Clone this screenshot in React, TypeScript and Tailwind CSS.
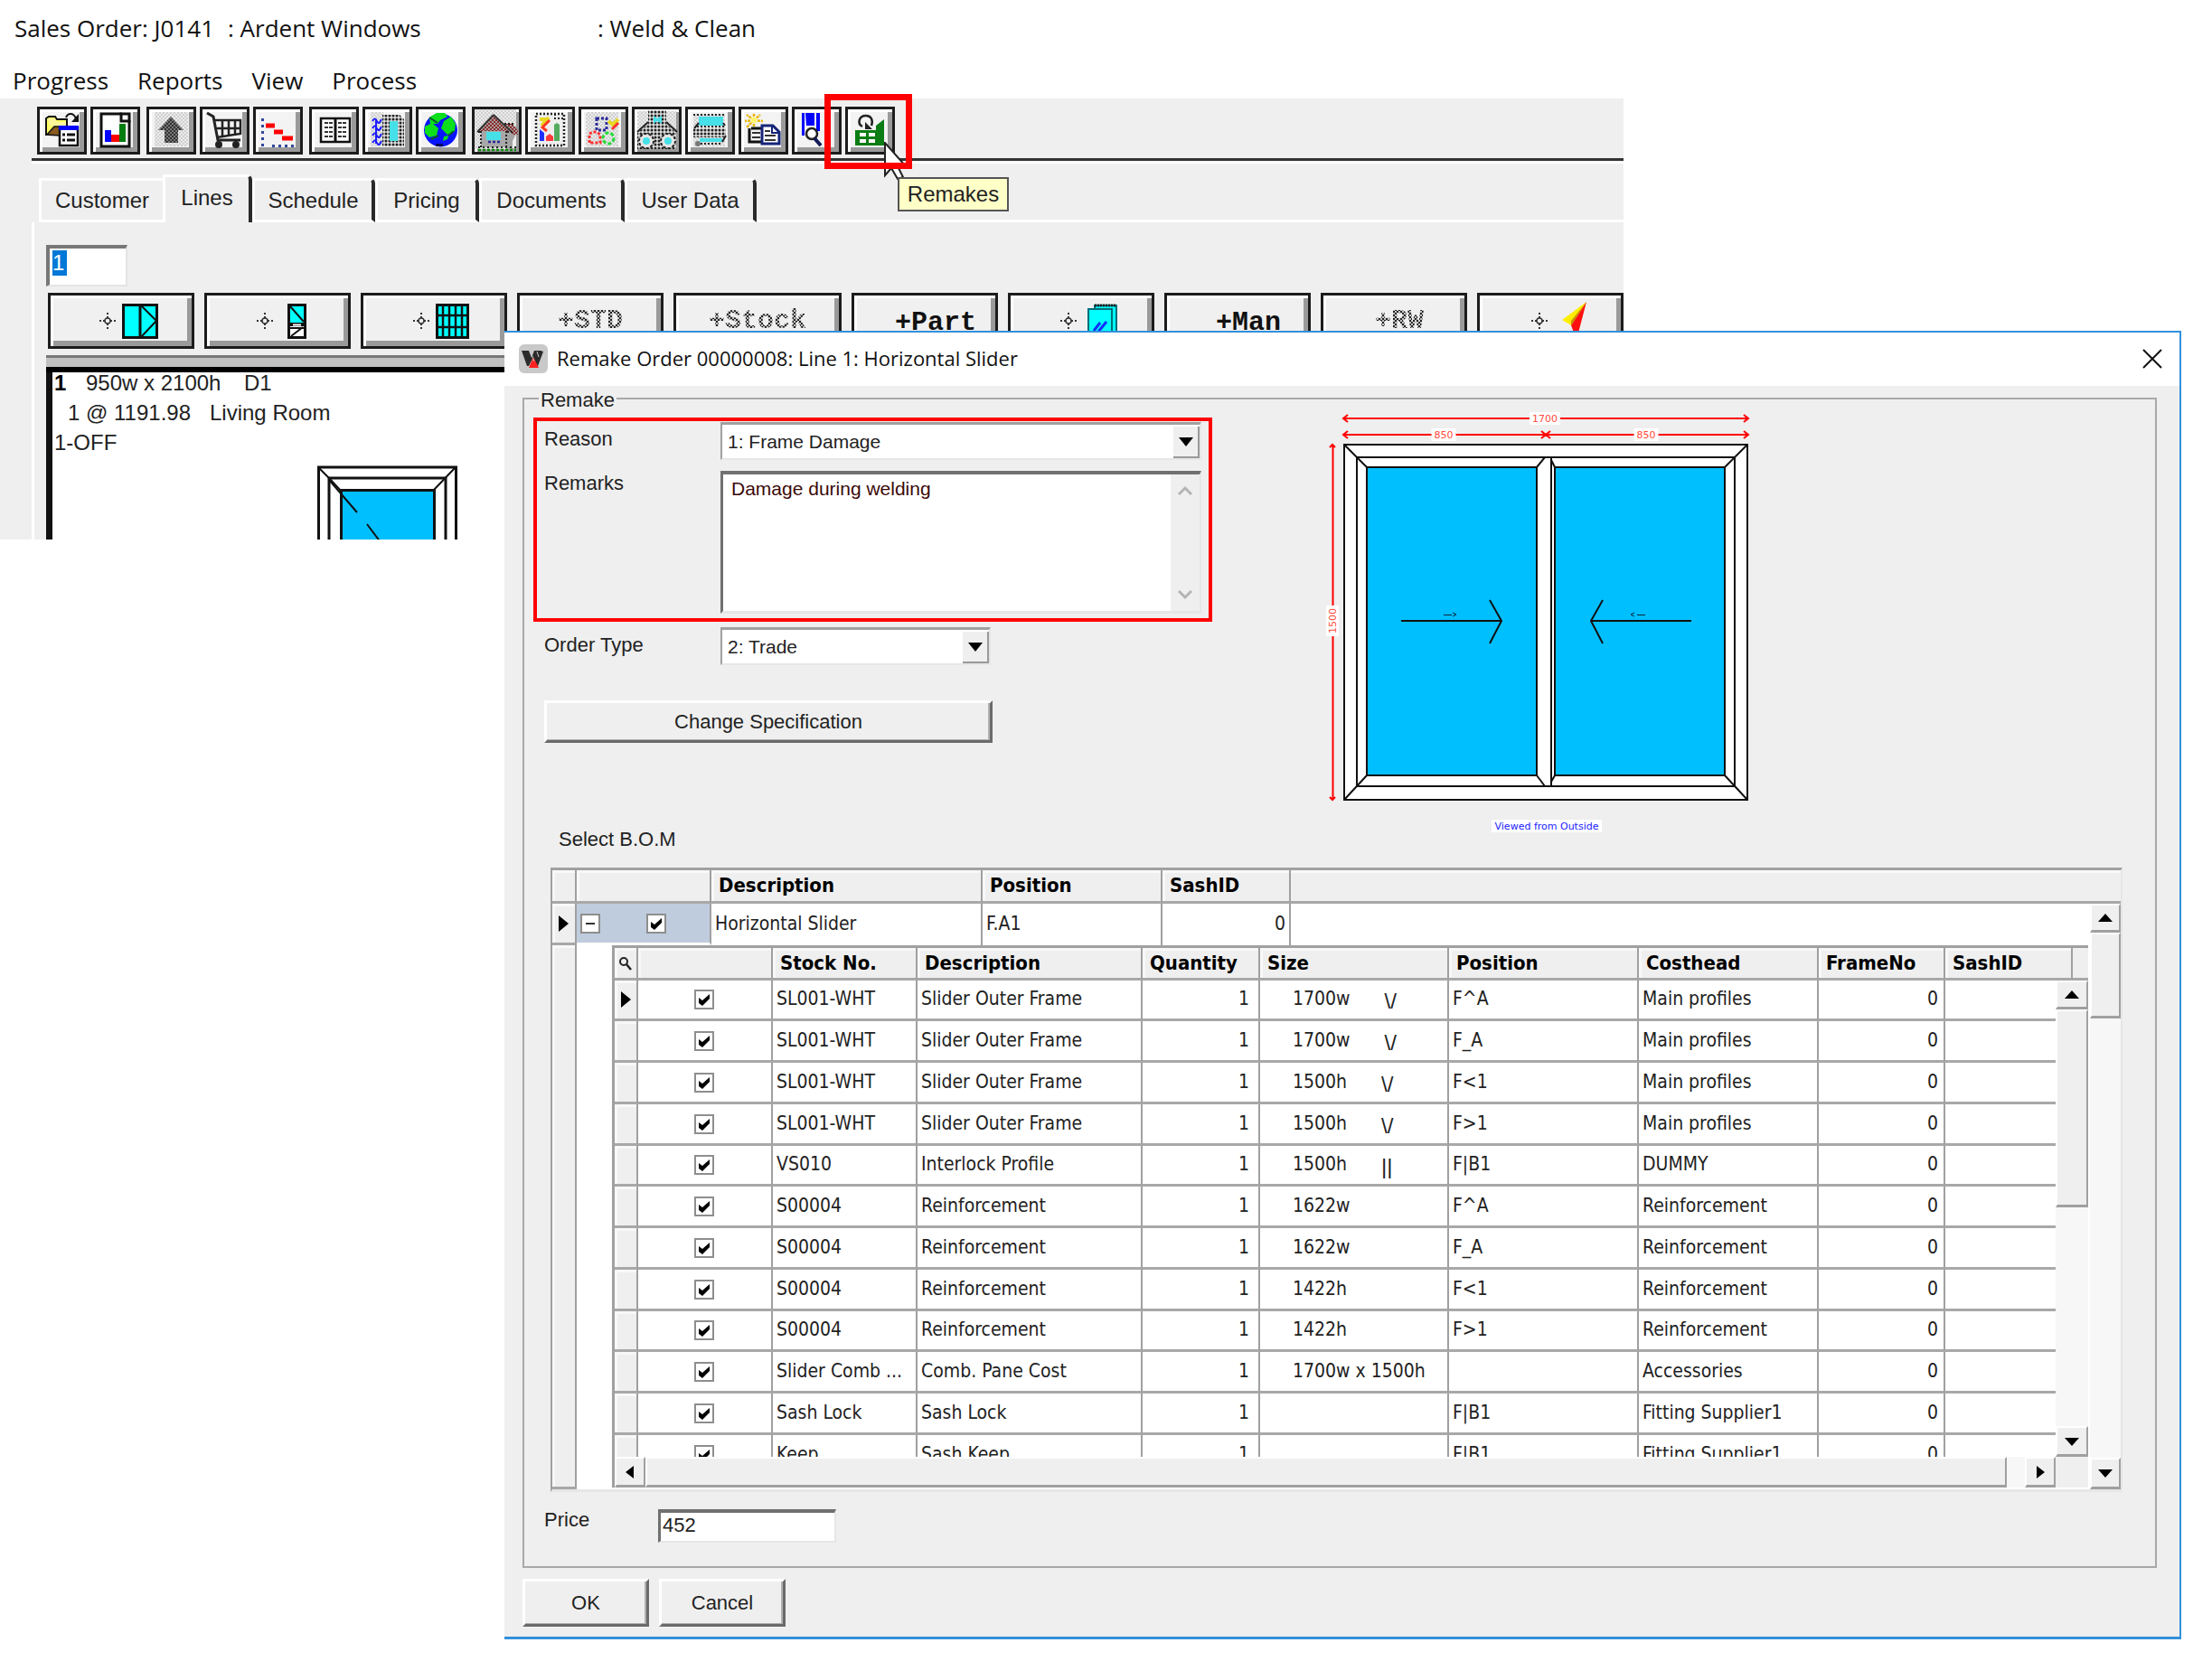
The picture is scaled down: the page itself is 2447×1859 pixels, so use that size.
import React from "react";

const ARIAL = "font-['Liberation_Sans',Arial,sans-serif]";
const SEGOE = "font-['Open_Sans','Noto_Sans',sans-serif]";
const TAHOMA = "font-['DejaVu_Sans_Condensed','Open_Sans',sans-serif]";

function Patterns() {
  return (
    <svg width="0" height="0" className="absolute" aria-hidden="true">
      <defs>
        <pattern id="mist" width="4" height="4" patternUnits="userSpaceOnUse">
          <rect width="4" height="4" fill="#ececec" />
          <rect width="2" height="2" fill="#cfcfcf" />
          <rect x="2" y="2" width="2" height="2" fill="#cfcfcf" />
        </pattern>
        <pattern id="dots" width="4" height="4" patternUnits="userSpaceOnUse">
          <rect width="4" height="4" fill="#e0e0e0" />
          <circle cx="2" cy="2" r="1.500" fill="#222" />
        </pattern>
        <pattern id="dense" width="4" height="4" patternUnits="userSpaceOnUse">
          <rect width="4" height="4" fill="#777" />
          <rect width="2" height="2" fill="#333" />
          <rect x="2" y="2" width="2" height="2" fill="#333" />
        </pattern>
        <pattern id="brick" width="4" height="4" patternUnits="userSpaceOnUse">
          <rect width="4" height="4" fill="#a89a9a" />
          <rect width="2" height="2" fill="#8a2a2a" />
          <rect x="2" y="2" width="2" height="2" fill="#8a2a2a" />
        </pattern>
      </defs>
    </svg>
  );
}

const ICONS: { name: string; art: React.ReactNode }[][] = [
  [
    {
      name: "Open order",
      art: (
        <>
          <path d="M10 32V13l3-2h7l2 3h11v8" fill="#ffff66" stroke="#111" strokeWidth="2" />
          <path d="M11 31l8-9h6v10z" fill="#8b5a1e" stroke="#111" strokeWidth="1.5" />
          <path d="M12 13h7l3 4h10v4H14z" fill="#fff59a" />
          <path d="M32 12c2-5 8-6 11 1" fill="none" stroke="#111" strokeWidth="2" />
          <path d="M46 8v9h-8z" fill="#111" />
          <rect x="25" y="23" width="20" height="20" fill="#fff" stroke="#111" strokeWidth="2.5" />
          <rect x="24" y="21" width="22" height="5" fill="#00f" />
          <path d="M28 31h3M28 37h3M33 31h9M33 37h9" stroke="#111" strokeWidth="3" />
        </>
      ),
    },
    {
      name: "Order report",
      art: (
        <>
          <path d="M12 8h22l9 8v28H12z" fill="#fff" stroke="#111" strokeWidth="3" />
          <path d="M34 8v8h9V8z" fill="#fff" stroke="#111" strokeWidth="3" />
          <rect x="16" y="26" width="7" height="13" fill="#00f" />
          <rect x="23" y="31" width="9" height="8" fill="#f00" />
          <rect x="32" y="19" width="7" height="20" fill="#007d10" />
        </>
      ),
    },
  ],
  [
    {
      name: "Promote",
      art: (
        <>
          <rect x="9" y="6" width="37" height="38" fill="url(#mist)" />
          <path d="M27 11l14 15h-6v14H20V26h-7z" fill="url(#dense)" />
        </>
      ),
    },
    {
      name: "Purchase",
      art: (
        <g fill="none" stroke="#222" strokeWidth="3">
          <path d="M8 7l7 4 5 26h25" />
          <path d="M17 15h28v15l-26 4M19 24h26M25 15v18M32 15v17M39 15v17" strokeWidth="2.5" />
          <circle cx="21" cy="42" r="2.5" fill="#222" />
          <circle cx="40" cy="42" r="2.5" fill="#222" />
        </g>
      ),
    },
    {
      name: "Schedule chart",
      art: (
        <>
          <path d="M10.5 13v32" stroke="#33479c" strokeWidth="3" strokeDasharray="3 4" />
          <path d="M21 43.500h25" stroke="#33479c" strokeWidth="3" strokeDasharray="3 4" />
          <path d="M14 21h10M23 28h10M32 35h12" stroke="#f00" strokeWidth="5" />
        </>
      ),
    },
  ],
  [
    {
      name: "Catalogue",
      art: (
        <>
          <path d="M13 13h32v26H13z" fill="#fff" stroke="#111" strokeWidth="2.500" />
          <path d="M29 12v28" stroke="#111" strokeWidth="3" />
          <path d="M17 18h9M17 23h9M17 28h9M17 33h9M32 18h9M32 23h9M32 28h9M32 33h9" stroke="#333" strokeWidth="2" strokeDasharray="4 1" />
        </>
      ),
    },
    {
      name: "Glazing",
      art: (
        <>
          <rect x="9" y="6" width="14" height="38" fill="url(#mist)" />
          <path d="M11 16q3-5 5 0t5-2M11 24q3-5 5 0t5-2M11 32q3-5 5 0t5-2M11 40q3-5 5 0t5-2M15 15v26" fill="none" stroke="#1d1dff" strokeWidth="2" />
          <path d="M22 9h19l5 5v30H22z" fill="url(#dots)" />
          <rect x="30" y="16" width="9" height="22" fill="#46e0e8" />
        </>
      ),
    },
    {
      name: "Web",
      art: (
        <>
          <circle cx="27.500" cy="26" r="18.500" fill="#0a14ff" />
          <path d="M15 12l8-5h9l3 4-8 4-3 4h-8zM10 22l8-4 7 6-2 8-8 2-5-5zM31 16l8-5 5 8-1 8-8 4-7-7zM31 33l5-1-1 4-5 2z" fill="#0be01a" />
          <path d="M15 12l9 6M25 32l-8 4M42 27l-6 5" stroke="#0b5a2a" strokeWidth="2" />
          <rect x="22" y="41" width="8" height="3" fill="#04085e" />
        </>
      ),
    },
  ],
  [
    {
      name: "House view",
      art: (
        <>
          <rect x="3" y="3" width="46" height="44" fill="url(#mist)" />
          <path d="M38 22h11v25H38z" fill="#a4a4a4" />
          <path d="M49 30l-4 8v8h4z" fill="#eee" />
          <path d="M36 19h9l6 8v4h-6z" fill="url(#brick)" />
          <path d="M36 19h10" stroke="#222" strokeWidth="2" strokeDasharray="2 2" />
          <path d="M24 9L42 27H7z" fill="url(#brick)" />
          <path d="M24 9L6 28M24 9l19 18" stroke="#333" strokeWidth="2" />
          <rect x="10" y="27" width="28" height="18" fill="#a8a8a8" />
          <path d="M10 27v20M38 27v20M7 28h3M39 28h6" stroke="#222" strokeWidth="2" strokeDasharray="2 2" />
          <rect x="16" y="28" width="16" height="9" fill="#46e0e8" />
          <path d="M18 39h13" stroke="#2a2a9c" strokeWidth="2.500" strokeDasharray="3 2" />
          <path d="M7 45h42" stroke="#222" strokeWidth="2" strokeDasharray="2 3" />
          <path d="M7 48h42" stroke="#0a8c0a" strokeWidth="2.500" strokeDasharray="3 2" />
        </>
      ),
    },
    {
      name: "Colour sheet",
      art: (
        <>
          <rect x="12" y="8" width="31" height="35" fill="#eee" stroke="#222" strokeWidth="2.500" strokeDasharray="2 2" />
          <path d="M33 8v5h9" fill="none" stroke="#222" strokeWidth="2" strokeDasharray="2 2" />
          <path d="M16 14h8M26 12l-8 9" stroke="#e8d820" strokeWidth="4" />
          <path d="M27 15l-8 8 5 4" fill="none" stroke="#ff3a20" strokeWidth="3" />
          <path d="M16 25l5 4v9h-5z" fill="#2030ff" />
          <path d="M23 38v-5l4-3 4 3v5z" fill="#ff3a3a" />
          <path d="M32 20l3-2 3 2v18h-6z" fill="#2a9a3a" opacity="0.8" />
        </>
      ),
    },
    {
      name: "Shapes",
      art: (
        <>
          <rect x="8" y="6" width="36" height="38" fill="url(#mist)" />
          <rect x="20" y="13" width="11" height="13" fill="none" stroke="#2b2b9a" strokeWidth="3" strokeDasharray="3 2" />
          <path d="M12 40V30l4-2h4l4 3v9z" fill="none" stroke="#ff3030" strokeWidth="3" strokeDasharray="3 2" />
          <circle cx="33" cy="35" r="6" fill="none" stroke="#22dd33" strokeWidth="3" strokeDasharray="4 2" />
          <path d="M44 14l-6 6-5-4" fill="none" stroke="#e8d820" strokeWidth="4" />
          <path d="M44 18l-7 7" stroke="#ff3030" strokeWidth="3" />
        </>
      ),
    },
    {
      name: "Conservatory",
      art: (
        <>
          <rect x="6" y="5" width="43" height="42" fill="url(#mist)" />
          <path d="M18 4h20v15l11 10v18H6V29l12-10z" fill="url(#dots)" />
          <path d="M18 17L6 28M38 17l12 11" stroke="#222" strokeWidth="2" />
          <path d="M24 10l4 3 5-3v9l-5-3-4 3z" fill="#46e0e8" />
          <circle cx="16" cy="38" r="8" fill="#e6e6e6" stroke="#222" strokeDasharray="3 2" strokeWidth="2" />
          <circle cx="40" cy="38" r="8" fill="#e6e6e6" stroke="#222" strokeDasharray="3 2" strokeWidth="2" />
          <circle cx="16" cy="38" r="4" fill="#46e0e8" />
          <circle cx="40" cy="38" r="4" fill="#46e0e8" />
        </>
      ),
    },
    {
      name: "Roll stock",
      art: (
        <>
          <path d="M9 8h35v36H9z" fill="url(#mist)" />
          <rect x="9" y="24" width="36" height="10" fill="url(#dots)" />
          <rect x="15" y="11" width="27" height="10" fill="#46e0e8" />
          <path d="M9 9h36M13 22h32M13 41h28" stroke="#222" strokeWidth="2" strokeDasharray="2 2" />
          <rect x="16" y="35" width="25" height="4" fill="#46e0e8" />
          <path d="M15 18l-5 6M42 18l2 3M45 32l-4 7" fill="none" stroke="#222" strokeWidth="2" />
          <circle cx="14" cy="41" r="3" fill="#777" />
        </>
      ),
    },
    {
      name: "Copy new",
      art: (
        <>
          <path d="M17 15L9 9M17 15V7M17 15l7-6M17 15l10 1M17 15l-8 8M17 15l-10 1M17 15v9" stroke="#e8b400" strokeWidth="2.500" strokeDasharray="3 1" />
          <rect x="14" y="12" width="6" height="6" fill="#fff36a" />
          <path d="M12 24v15h13M14 24h11" fill="none" stroke="#111" strokeWidth="3" />
          <path d="M15 29h9M15 34h9" stroke="#333" strokeWidth="2" />
          <path d="M26 21h12l7 7v13H26z" fill="#fff" stroke="#16247a" strokeWidth="3" />
          <path d="M37 21v8h8" fill="none" stroke="#16247a" strokeWidth="2" />
          <path d="M29 27h6M29 32h12M29 37h12" stroke="#333" strokeWidth="2" />
        </>
      ),
    },
    {
      name: "Find item",
      art: (
        <>
          <path d="M11 7h3v25h-3zM15 7h10v14h-9zM27 7h4v20h-4zM37 7h5v25h-5z" fill="#0000ff" />
          <circle cx="22" cy="30" r="6" fill="#fff" stroke="#222" strokeWidth="2.500" />
          <path d="M25 35l7 8" stroke="#111a55" strokeWidth="4" />
        </>
      ),
    },
    {
      name: "Remakes",
      art: (
        <>
          <path d="M19 22c-6-3-4-12 4-12 6 0 8 5 6 11" fill="none" stroke="#222" strokeWidth="2.500" />
          <path d="M22 17v8h8z" fill="#222" />
          <path d="M11 26h23v-5l9-7v29H11z" fill="#0a7d14" />
          <path d="M16 29h7v4h-7zM26 29h7v4h-7zM16 36h7v4h-7zM26 36h7v4h-7z" fill="#fff" />
        </>
      ),
    },
  ],
];

function ToolButton({ name, art }: { name: string; art: React.ReactNode }) {
  return (
    <button
      type="button"
      aria-label={name}
      className="block h-[53px] w-[55px] shrink-0 border-[3px] border-[#1c1c1c] bg-[#f3f3f3] shadow-[inset_3px_3px_0_#fff,inset_-5px_-5px_0_#9a9a9a]"
    >
      <svg viewBox="3 3 49 47" className="block size-full">
        {art}
      </svg>
    </button>
  );
}

function DottedPlus() {
  return (
    <svg viewBox="0 0 18 18" className="size-[18px]">
      <path d="M9 0v18M0 9h18" stroke="#333" strokeWidth="2" strokeDasharray="2 2" />
      <circle cx="9" cy="9" r="3" fill="#f0f0f0" stroke="#333" strokeWidth="1.500" />
    </svg>
  );
}

function PlainPlus({ children }: { children: React.ReactNode }) {
  return (
    <span className="flex items-center gap-[7px] pl-4">
      <DottedPlus />
      {children}
    </span>
  );
}

const DITHER =
  "bg-[repeating-conic-gradient(#222_0_25%,#c4c4c4_0_50%)] bg-[length:4px_4px] bg-clip-text text-transparent";

const ADD_BUTTONS: { name: string; wide?: boolean; body: React.ReactNode }[] = [
  {
    name: "Add frame",
    body: (
      <PlainPlus>
        <svg viewBox="0 0 40 39" className="h-[39px] w-10">
          <rect x="1.500" y="1.500" width="37" height="36" fill="#0ff" stroke="#111" strokeWidth="3" />
          <path d="M20 0v39" stroke="#111" strokeWidth="3" />
          <path d="M21 2l17 17-17 18" fill="none" stroke="#111" strokeWidth="2" />
        </svg>
      </PlainPlus>
    ),
  },
  {
    name: "Add sash",
    body: (
      <span className="flex items-center gap-4 pl-2">
        <DottedPlus />
        <svg viewBox="0 0 21 39" className="h-[39px] w-[21px]">
          <rect x="1.500" y="1.500" width="18" height="36" fill="#fff" stroke="#111" strokeWidth="3" />
          <rect x="3" y="3" width="15" height="18" fill="#0ff" />
          <path d="M3 3l15 17M4 36L17 26" stroke="#111" strokeWidth="2" />
          <path d="M0 23h21" stroke="#111" strokeWidth="4" />
          <path d="M6 23.500h9" stroke="#fff" strokeWidth="2" />
          <path d="M2 27h17" stroke="#111" strokeWidth="2" />
        </svg>
      </span>
    ),
  },
  {
    name: "Add grid",
    body: (
      <PlainPlus>
        <svg viewBox="0 0 37 39" className="h-[39px] w-[37px]">
          <rect x="1.500" y="1.500" width="34" height="36" fill="#0ff" stroke="#111" strokeWidth="3" />
          <path d="M8 0v39M15 0v39M22 0v39M29 0v39M0 13h37M0 26h37" stroke="#111" strokeWidth="2.500" />
        </svg>
      </PlainPlus>
    ),
  },
  { name: "Add standard", body: <span className={DITHER}>+STD</span> },
  { name: "Add stock", wide: true, body: <span className={DITHER}>+Stock</span> },
  { name: "Add part", body: <span className="pt-1 pl-6">+Part</span> },
  {
    name: "Add glass",
    body: (
      <span className="flex items-center gap-3 pl-4">
        <DottedPlus />
        <svg viewBox="0 0 33 39" className="h-[39px] w-[33px]">
          <rect x="8" y="2" width="24" height="30" fill="#0ff" stroke="#006e78" strokeWidth="2" />
          <path d="M8 2h24" stroke="#222" strokeWidth="3" strokeDasharray="2 1" />
          <rect x="1" y="6" width="26" height="32" fill="#0ff" stroke="#006e78" strokeWidth="2" />
          <path d="M7 30l7-9M12 31l9-11" stroke="#1030ff" strokeWidth="3" />
        </svg>
      </span>
    ),
  },
  { name: "Add manual", body: <span className="pt-1 pl-6">+Man</span> },
  {
    name: "Add rework",
    body: (
      <span className="pl-3">
        <span className={DITHER}>+RW</span>
      </span>
    ),
  },
  {
    name: "Add arrow",
    body: (
      <span className="flex items-center gap-4 pl-5">
        <DottedPlus />
        <svg viewBox="0 0 28 46" className="h-[46px] w-7">
          <path d="M27 2L0 22l10 6z" fill="#ffee00" />
          <path d="M27 2L10 28l6 16z" fill="#ff1010" />
          <path d="M27 2L10 28v-5z" fill="#c89000" />
        </svg>
      </span>
    ),
  },
];

const TABS = [
  { label: "Customer", width: "w-[137px]" },
  { label: "Lines", width: "w-[99px]" },
  { label: "Schedule", width: "w-[136px]" },
  { label: "Pricing", width: "w-[115px]" },
  { label: "Documents", width: "w-[161px]" },
  { label: "User Data", width: "w-[146px]" },
];

function SalesOrderWindow() {
  return (
    <div className="[grid-area:1/1]">
      <header className={`${SEGOE} text-[26px] text-[#111]`}>
        <h1 className="flex h-[62px] items-center pl-4">
          <span className="w-[236px]">Sales Order: J0141</span>
          <span className="w-[409px]">: Ardent Windows</span>
          <span>: Weld &amp; Clean</span>
        </h1>
        <nav className="flex h-[47px] items-center gap-8 pt-2 pl-3.5">
          <button type="button">Progress</button>
          <button type="button">Reports</button>
          <button type="button">View</button>
          <button type="button">Process</button>
        </nav>
      </header>

      <main className="mr-[651px] bg-[#efefef] pt-[9px]">
        <div className="flex h-[53px] gap-[7px] pl-[41px]">
          {ICONS.map((group, i) => (
            <div key={i} className="flex gap-1">
              {group.map((icon) =>
                icon.name === "Remakes" ? (
                  <div key={icon.name} className="relative">
                    <ToolButton {...icon} />
                    <svg viewBox="0 0 26 42" className="absolute top-[39px] left-[43px] h-[42px] w-[26px]">
                      <path d="M1 1v36l7-8 7 12 6-2-6-12h9z" fill="#fff" stroke="#222" strokeWidth="2" />
                    </svg>
                    <div className="absolute -top-3.5 -left-[23px] h-[83px] w-[97px] border-[7px] border-[#ff0000]" />
                    <div
                      role="tooltip"
                      className={`${ARIAL} absolute top-[78px] left-[58px] flex h-[38px] w-[123px] items-center justify-center border-2 border-[#555] bg-[#ffffc8] text-[24px] text-[#222]`}
                    >
                      Remakes
                    </div>
                  </div>
                ) : (
                  <ToolButton key={icon.name} {...icon} />
                ),
              )}
            </div>
          ))}
        </div>
        <div className="mt-1 ml-[35px] h-[6px] border-t-[3px] border-b-2 border-t-[#333] border-b-white" />

        <div className={`${ARIAL} mt-3 flex h-[53px] items-end pl-[43px] text-[24px] text-[#222]`} role="tablist">
          {TABS.map((tab) => {
            const active = tab.label === "Lines";
            const first = tab.label === "Customer";
            return (
              <button
                key={tab.label}
                type="button"
                role="tab"
                aria-selected={active}
                className={`${tab.width} border-t-[3px] border-l-[3px] border-t-white border-l-white ${
                  active ? "h-[53px] pb-1" : "h-[49px] border-b-[3px] border-b-white"
                } ${first ? "" : "rounded-tr-md border-r-4 border-r-[#2a2a2a]"}`}
              >
                {tab.label}
              </button>
            );
          })}
          <div className="h-[3px] flex-1 bg-white" />
        </div>

        <div className="ml-[35px] border-l-[3px] border-white pt-[25px] pl-[13px]">
          <label className="block w-[90px]">
            <span className="sr-only">Line number</span>
            <span className="flex h-[46px] items-start border-t-4 border-r-2 border-b-2 border-l-4 border-t-[#777] border-r-[#e4e4e4] border-b-[#e4e4e4] border-l-[#777] bg-white pt-0.5 pl-[3px]">
              <input
                defaultValue="1"
                className={`${ARIAL} h-7 w-4 bg-[#0078d7] text-[24px] leading-7 text-white outline-none`}
              />
            </span>
          </label>
          <div className="mt-[7px] flex gap-[11px] pl-0.5 font-['Liberation_Mono','Courier_New',monospace] text-[30px] font-bold text-[#111]">
            {ADD_BUTTONS.map((button) => (
              <button
                key={button.name}
                type="button"
                aria-label={button.name}
                className={`flex h-[62px] items-center justify-center border-[3px] border-[#1c1c1c] bg-[#f0f0f0] shadow-[inset_3px_3px_0_#fff,inset_-5px_-6px_0_#9a9a9a] ${
                  button.wide ? "w-[186px]" : "min-w-0 flex-1"
                }`}
              >
                {button.body}
              </button>
            ))}
          </div>

          <div className="mt-[7px] h-[19px] border-t-[3px] border-b-[6px] border-t-[#777] border-b-black bg-[#c0c0c0]" />
          <div className={`${ARIAL} h-[185px] overflow-hidden border-l-[7px] border-[#111] bg-white pl-0.5 text-[24px] leading-[33px] text-[#222]`}>
            <p className="-mt-[5px] flex">
              <b className="w-[35px] text-black">1</b>
              <span className="w-[175px]">950w x 2100h</span>
              <span>D1</span>
            </p>
            <p className="flex pl-[15px]">
              <span className="w-[157px]">1 @ 1191.98</span>
              <span>Living Room</span>
            </p>
            <p>1-OFF</p>
            <svg viewBox="352 506 156 91" className="ml-[291px] h-[91px] w-[156px]">
              <g fill="none" stroke="#111" strokeWidth="3">
                <path d="M353.500 600V517h152v83" />
                <path d="M365 600V529h129v71" />
                <path d="M378.500 600V542.500h103V600" fill="#00bfff" />
                <path d="M353 517l12 12M505 517l-24 25M365 529l13 14" strokeWidth="2" />
                <path d="M365 531l31 36M407 580l15 20" strokeWidth="2" />
              </g>
            </svg>
          </div>
        </div>
      </main>
    </div>
  );
}

function Select({ id, value }: { id: string; value: string }) {
  return (
    <span className="relative block w-full">
      <select
        id={id}
        defaultValue={value}
        className="h-[42px] w-full appearance-none border-2 border-t-[3px] border-[#e6e6e6] border-t-[#a0a0a0] border-l-[#a0a0a0] bg-white pl-1.5 text-[21px] text-[#222]"
      >
        <option>{value}</option>
      </select>
      <span className="pointer-events-none absolute top-[5px] right-0.5 flex h-[35px] w-[29px] items-center justify-center border-r-2 border-b-2 border-[#999] bg-[#efefef]">
        <svg viewBox="0 0 16 10" className="h-2.5 w-4">
          <path d="M0 0h16l-8 10z" fill="#000" />
        </svg>
      </span>
    </span>
  );
}

function DimensionText({ x, y, w, children }: { x: number; y: number; w: number; children: string }) {
  return (
    <>
      <rect x={x - w / 2} y={y - 7} width={w} height="14" fill="#fff" />
      <text x={x} y={y + 4} textAnchor="middle" fontSize="11" fill="#ff4a3a">
        {children}
      </text>
    </>
  );
}

function SliderDrawing() {
  return (
    <svg viewBox="1464 456 476 466" className="h-[466px] w-[476px] font-['DejaVu_Sans',sans-serif]">
      <g stroke="#f00" strokeWidth="2" fill="none">
        <path d="M1487 464h446M1491 460l-5 4 5 4M1929 460l5 4-5 4" />
        <path d="M1487 482h446M1491 478l-5 4 5 4M1929 478l5 4-5 4M1705 478l5 4-5 4M1715 478l-5 4 5 4" />
        <path d="M1474.500 493v393M1471 496l3-3 3 3M1471 883l3 3 3-3" />
      </g>
      <DimensionText x={1709} y={464} w={34}>1700</DimensionText>
      <DimensionText x={1597} y={482} w={27}>850</DimensionText>
      <DimensionText x={1821} y={482} w={27}>850</DimensionText>
      <g transform="rotate(-90 1474 688)">
        <DimensionText x={1474} y={688} w={34}>1500</DimensionText>
      </g>
      <g stroke="#111" strokeWidth="2">
        <rect x="1487" y="493" width="446" height="393" fill="#fff" />
        <rect x="1501" y="507" width="418" height="364" fill="#fff" />
        <rect x="1512" y="518" width="188" height="341" fill="#00bfff" />
        <rect x="1720" y="518" width="188" height="341" fill="#00bfff" />
        <path d="M1716 507v364M1487 493l25 25M1933 493l-25 25M1487 886l25-27M1933 886l-25-27M1700 518l9-11M1700 859l9 12M1716 510l4 8M1716 866l4-7" fill="none" />
        <path d="M1550 688h111M1648 665l13 23-13 25M1871 688h-111M1773 665l-13 23 13 25" fill="none" />
      </g>
      <path d="M1597 681.500h9M1607 679l4 2-4 2M1811 681.500h9M1808 679l-4 2 4 2" stroke="#123" fill="none" />
      <rect x="1650" y="908" width="122" height="14" fill="#fff" />
      <text x="1711" y="919" textAnchor="middle" fontSize="11" fill="#2222ff">
        Viewed from Outside
      </text>
    </svg>
  );
}

function Check({ label }: { label: string }) {
  return (
    <span className="inline-grid h-[22px] w-[22px] align-middle">
      <input
        type="checkbox"
        defaultChecked
        aria-label={label}
        className="h-[22px] w-[22px] appearance-none border-2 border-[#8e8e8e] bg-white [grid-area:1/1]"
      />
      <svg viewBox="0 0 22 22" className="pointer-events-none size-[22px] [grid-area:1/1]">
        <path d="M5 9v6l4 3 8-8V5l-8 7z" fill="#000" />
      </svg>
    </span>
  );
}

function Marker() {
  return (
    <svg viewBox="0 0 11 18" className="mx-auto block h-[18px] w-[11px]">
      <path d="M0 0l11 9-11 9z" fill="#000" />
    </svg>
  );
}

const ARROWS = {
  up: "M8 3l8 9H0z",
  down: "M0 4h16l-8 9z",
  left: "M12 1v14l-9-7z",
  right: "M4 1v14l9-7z",
};

function ScrollButton({ dir, size }: { dir: keyof typeof ARROWS; size: string }) {
  return (
    <button
      type="button"
      aria-label={`Scroll ${dir}`}
      className={`${size} flex shrink-0 items-center justify-center border-t-2 border-r-2 border-b-[3px] border-l-2 border-t-white border-r-[#a0a0a0] border-b-[#a0a0a0] border-l-white bg-[#efefef]`}
    >
      <svg viewBox="0 0 16 16" className="size-4">
        <path d={ARROWS[dir]} fill="#000" />
      </svg>
    </button>
  );
}

const THUMB =
  "border-t-2 border-r-2 border-b-[3px] border-l-2 border-t-white border-r-[#a0a0a0] border-b-[#a0a0a0] border-l-white bg-[#efefef]";
const TH =
  "border-r-2 border-b-[3px] border-r-[#a0a0a0] border-b-[#a8a8a8] bg-[#efefef] pl-2 text-left text-[22px] leading-6 font-bold text-black shadow-[inset_3px_3px_0_#f8f8f8]";
const CELL = "overflow-hidden border-r-2 border-b-[3px] border-r-[#a0a0a0] border-b-[#a8a8a8] whitespace-nowrap";
const TD = `${CELL} pl-1`;
const TD_HEAD =
  "border-r-2 border-b-[3px] border-r-[#a0a0a0] border-b-[#a8a8a8] bg-[#efefef] p-0 shadow-[inset_3px_3px_0_#f8f8f8]";

const ROWS: [string, string, string, string, string, string][] = [
  ["SL001-WHT", "Slider Outer Frame", "1700w", "\\/", "F^A", "Main profiles"],
  ["SL001-WHT", "Slider Outer Frame", "1700w", "\\/", "F_A", "Main profiles"],
  ["SL001-WHT", "Slider Outer Frame", "1500h", "\\/", "F<1", "Main profiles"],
  ["SL001-WHT", "Slider Outer Frame", "1500h", "\\/", "F>1", "Main profiles"],
  ["VS010", "Interlock Profile", "1500h", "||", "F|B1", "DUMMY"],
  ["S00004", "Reinforcement", "1622w", "", "F^A", "Reinforcement"],
  ["S00004", "Reinforcement", "1622w", "", "F_A", "Reinforcement"],
  ["S00004", "Reinforcement", "1422h", "", "F<1", "Reinforcement"],
  ["S00004", "Reinforcement", "1422h", "", "F>1", "Reinforcement"],
  ["Slider Comb ...", "Comb. Pane Cost", "1700w x 1500h", "", "", "Accessories"],
  ["Sash Lock", "Sash Lock", "", "", "F|B1", "Fitting Supplier1"],
  ["Keep", "Sash Keep", "", "", "F|B1", "Fitting Supplier1"],
];

function PartsGrid() {
  return (
    <div className="mr-9 ml-[39px] border-t-[3px] border-l-[3px] border-[#a0a0a0]">
      <div className="relative h-[563px] overflow-hidden">
        <table className="w-full table-fixed border-separate border-spacing-0">
          <colgroup>
            <col className="w-[26px]" />
            <col className="w-[149px]" />
            <col className="w-[160px]" />
            <col className="w-[249px]" />
            <col className="w-[130px]" />
            <col className="w-[209px]" />
            <col className="w-[210px]" />
            <col className="w-[199px]" />
            <col className="w-[140px]" />
            <col className="w-[141px]" />
            <col />
          </colgroup>
          <thead>
            <tr className="h-9">
              <th className={TD_HEAD}>
                <svg viewBox="0 0 16 16" className="mx-auto block size-4" aria-label="Find">
                  <circle cx="6" cy="6" r="4" fill="none" stroke="#222" strokeWidth="2" />
                  <path d="M9 9l5 6" stroke="#222" strokeWidth="2.500" />
                </svg>
              </th>
              <th className={TH} />
              <th className={TH}>Stock No.</th>
              <th className={TH}>Description</th>
              <th className={TH}>Quantity</th>
              <th className={TH}>Size</th>
              <th className={TH}>Position</th>
              <th className={TH}>Costhead</th>
              <th className={TH}>FrameNo</th>
              <th className={TH}>SashID</th>
              <th className="border-b-[3px] border-[#a8a8a8] bg-[#efefef]" />
            </tr>
          </thead>
          <tbody>
            {ROWS.map(([stock, description, size, cut, position, costhead], i) => (
              <tr key={i} className="h-[46px] nth-[4n+1]:h-[45px]">
                <td className={TD_HEAD}>{i === 0 && <Marker />}</td>
                <td className={`${CELL} pr-0.5 text-center leading-none`}>
                  <Check label={`${stock} ${position}`} />
                </td>
                <td className={TD}>{stock}</td>
                <td className={TD}>{description}</td>
                <td className={`${CELL} pr-2.5 text-right`}>1</td>
                <td className={`${CELL} pl-9`}>
                  <span className="flex items-center">
                    {size}
                    {cut && <span className={`${ARIAL} pt-1 pl-[38px] text-[24px] leading-7`}>{cut}</span>}
                  </span>
                </td>
                <td className={TD}>{position}</td>
                <td className={TD}>{costhead}</td>
                <td className={`${CELL} pr-1.5 text-right`}>0</td>
                <td className="border-b-[3px] border-[#a8a8a8]" />
                <td className="border-b-[3px] border-[#a8a8a8]" />
              </tr>
            ))}
          </tbody>
        </table>
        <div className="absolute top-9 right-0 bottom-0 flex w-9 flex-col bg-[#f7f7f7]">
          <ScrollButton dir="up" size="h-8 w-full" />
          <div className={`${THUMB} h-[219px]`} />
          <div className="flex-1" />
          <ScrollButton dir="down" size="h-[34px] w-full" />
        </div>
      </div>
      <div className="flex h-[34px] bg-[#f7f7f7]">
        <ScrollButton dir="left" size="h-full w-[34px]" />
        <div className={`${THUMB} flex-1`} />
        <div className="w-5" />
        <ScrollButton dir="right" size="h-full w-[34px]" />
        <div className="w-9 bg-[#efefef]" />
      </div>
    </div>
  );
}

function BomGrid() {
  return (
    <div
      className={`${TAHOMA} relative mt-[23px] mr-9 ml-[29px] border-t-[3px] border-r-2 border-b-[3px] border-l-2 border-t-[#a0a0a0] border-r-[#e6e6e6] border-b-[#e6e6e6] border-l-[#a0a0a0] bg-white text-[21px] text-[#222]`}
    >
      <table className="w-full table-fixed border-separate border-spacing-0">
        <colgroup>
          <col className="w-[27px]" />
          <col className="w-[149px]" />
          <col className="w-[300px]" />
          <col className="w-[199px]" />
          <col className="w-[142px]" />
          <col />
        </colgroup>
        <thead>
          <tr className="h-[37px]">
            <th className={TD_HEAD} />
            <th className={TH} />
            <th className={TH}>Description</th>
            <th className={TH}>Position</th>
            <th className={TH}>SashID</th>
            <th className="border-b-[3px] border-[#a8a8a8] bg-[#efefef] shadow-[inset_0_3px_0_#f8f8f8]" />
          </tr>
        </thead>
        <tbody>
          <tr className="h-[46px]">
            <td className={TD_HEAD}>
              <Marker />
            </td>
            <td className="border-r-2 border-b-[3px] border-r-[#a0a0a0] border-b-white bg-[#bfccdd] p-0 pl-1">
              <span className="flex items-center gap-[51px]">
                <button
                  type="button"
                  aria-label="Collapse"
                  className="flex h-[22px] w-[22px] items-center justify-center border-2 border-[#8e8e8e] bg-white"
                >
                  <span className="h-0.5 w-2.5 bg-[#333]" />
                </button>
                <Check label="Horizontal Slider" />
              </span>
            </td>
            <td className="border-r-2 border-[#a0a0a0] pl-1">Horizontal Slider</td>
            <td className="border-r-2 border-[#a0a0a0] pl-1">F.A1</td>
            <td className="border-r-2 border-[#a0a0a0] pr-1 text-right">0</td>
            <td />
          </tr>
          <tr>
            <td className={TD_HEAD} />
            <td colSpan={5} className="h-[602px] p-0 align-top">
              <PartsGrid />
            </td>
          </tr>
        </tbody>
      </table>
      <div className="absolute top-[37px] right-0 bottom-0 flex w-[34px] flex-col bg-[#f7f7f7]">
        <ScrollButton dir="up" size="h-8 w-full" />
        <div className={`${THUMB} h-[95px]`} />
        <div className="flex-1" />
        <ScrollButton dir="down" size="h-[35px] w-full" />
      </div>
    </div>
  );
}

const PUSH =
  "border-[3px] border-t-white border-r-[#6a6a6a] border-b-[#6a6a6a] border-l-white bg-[#efefef] shadow-[inset_-2px_-1px_0_#b0b0b0]";

function RemakeDialog() {
  return (
    <section
      role="dialog"
      aria-label="Remake Order"
      className={`${ARIAL} z-10 mt-[366px] mr-[34px] ml-[558px] self-start border-t-2 border-r-2 border-b-[3px] border-[#3390dc] bg-[#efefef] text-[22px] text-[#222] [grid-area:1/1]`}
    >
      <header className={`${SEGOE} flex h-[59px] items-center bg-white pr-[19px] pb-0.5 pl-4 text-[#111]`}>
        <svg viewBox="0 0 32 32" className="mr-2.5 size-8">
          <rect width="32" height="32" rx="6" fill="#c9c9c9" />
          <path d="M3 7h8l3 8 3-8h7l3 1-6 16h-3l-3-8-4 8H9z" fill="#2b2b2b" />
          <path d="M16 14l6 12H11z" fill="#ff2020" />
          <path d="M13 8l4 11M20 8l2 6" stroke="#c9c9c9" strokeWidth="1" />
        </svg>
        <h2 className="flex-1">Remake Order 00000008: Line 1: Horizontal Slider</h2>
        <button type="button" aria-label="Close">
          <svg viewBox="0 0 22 22" className="size-[22px]">
            <path d="M1 1l20 20M21 1L1 21" stroke="#111" strokeWidth="2" />
          </svg>
        </button>
      </header>

      <div className="pr-[25px] pb-[11px] pl-5">
        <fieldset className="min-w-0 border-2 border-[#a8a8a8] pb-[26px]">
          <legend className="ml-4 px-0.5 pt-1 leading-6">Remake</legend>
          <div className="flex items-start gap-[123px] pl-2.5">
            <div className="w-[751px] pt-[7px]">
              <div className="grid grid-cols-[195px_532px] gap-y-3 border-4 border-[#f00] pt-px pb-[5px] pl-2">
                <label htmlFor="reason" className="self-center pb-1 leading-6">Reason</label>
                <Select id="reason" value="1: Frame Damage" />
                <label htmlFor="remarks" className="pt-0.5 leading-6">Remarks</label>
                <div className="flex h-[158px] border-t-4 border-r-2 border-b-[3px] border-l-[3px] border-t-[#707070] border-r-[#e6e6e6] border-b-[#e6e6e6] border-l-[#707070] bg-white">
                  <textarea
                    id="remarks"
                    defaultValue="Damage during welding"
                    className="flex-1 resize-none overflow-hidden bg-transparent pt-1 pl-[9px] text-[21px] leading-6 text-[#3c0a0a] outline-none"
                  />
                  <div className="flex w-8 flex-col items-center justify-between bg-[#efefef] py-3">
                    <svg viewBox="0 0 16 10" className="h-3 w-4">
                      <path d="M1 9l7-7 7 7" fill="none" stroke="#b4b4b4" strokeWidth="3" />
                    </svg>
                    <svg viewBox="0 0 16 10" className="h-3 w-4">
                      <path d="M1 1l7 7 7-7" fill="none" stroke="#b4b4b4" strokeWidth="3" />
                    </svg>
                  </div>
                </div>
              </div>
              <div className="mt-1.5 grid grid-cols-[195px_299px] pl-3">
                <label htmlFor="order-type" className="self-center pb-0.5 leading-6">Order Type</label>
                <Select id="order-type" value="2: Trade" />
              </div>
              <button type="button" className={`${PUSH} mt-[39px] ml-3 block h-[47px] w-[496px] leading-6`}>
                Change Specification
              </button>
            </div>
            <SliderDrawing />
          </div>

          <h3 className="pl-[38px] leading-4">Select B.O.M</h3>
          <BomGrid />

          <div className="mt-[19px] flex items-start pl-[22px]">
            <label htmlFor="price" className="w-[126px] leading-6">Price</label>
            <input
              id="price"
              defaultValue="452"
              className="h-[37px] w-[197px] border-t-4 border-r-2 border-b-2 border-l-[3px] border-t-[#707070] border-r-[#e6e6e6] border-b-[#e6e6e6] border-l-[#707070] bg-white pb-1 pl-0.5 outline-none"
            />
          </div>
        </fieldset>

        <div className="mt-3 flex gap-[11px]">
          <button type="button" className={`${PUSH} h-[53px] w-[140px] leading-6`}>OK</button>
          <button type="button" className={`${PUSH} h-[53px] w-[140px] leading-6`}>Cancel</button>
        </div>
      </div>
    </section>
  );
}

export default function App() {
  return (
    <div className="grid min-h-screen grid-cols-1 bg-white">
      <Patterns />
      <SalesOrderWindow />
      <RemakeDialog />
    </div>
  );
}
